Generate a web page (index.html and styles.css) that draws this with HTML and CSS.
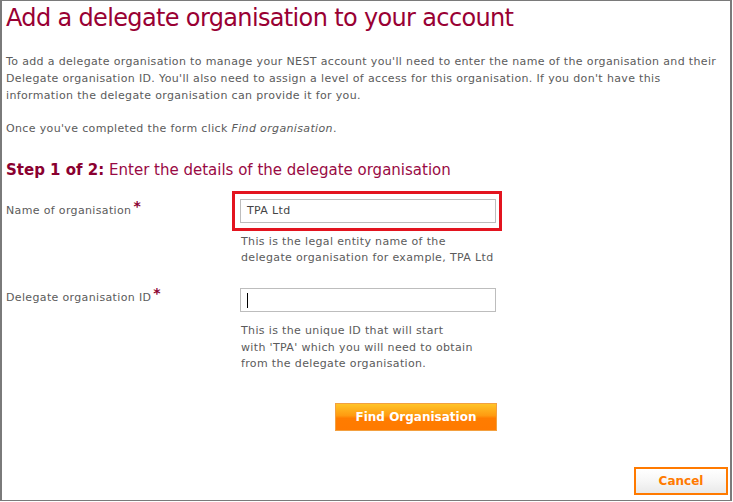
FILE: index.html
```html
<!DOCTYPE html>
<html>
<head>
<meta charset="utf-8">
<link rel="stylesheet" href="styles.css">
</head>
<body>
<div class="frame">
  <h1 class="title">Add a delegate organisation to your account</h1>
  <p class="intro">To add a delegate organisation to manage your NEST account you'll need to enter the name of the organisation and their Delegate organisation ID. You'll also need to assign a level of access for this organisation. If you don't have this information the delegate organisation can provide it for you.</p>
  <p class="intro once">Once you've completed the form click <em>Find organisation</em>.</p>
  <h2 class="step"><strong>Step 1 of 2:</strong> Enter the details of the delegate organisation</h2>

  <div class="row row-first">
    <label class="label">Name of organisation<span class="req">*</span></label>
    <div class="field">
      <div class="highlight">
        <div class="input">TPA Ltd</div>
      </div>
      <div class="help">This is the legal entity name of the<br>delegate organisation for example, TPA Ltd</div>
    </div>
  </div>

  <div class="row row-second">
    <label class="label">Delegate organisation ID<span class="req">*</span></label>
    <div class="field">
      <div class="input"><span class="caret"></span></div>
      <div class="help help-second">This is the unique ID that will start<br>with 'TPA' which you will need to obtain<br>from the delegate organisation.</div>
    </div>
  </div>

  <div class="actions">
    <button class="find">Find Organisation</button>
  </div>
  <div class="cancel-row">
    <button class="cancel">Cancel</button>
  </div>
</div>
</body>
</html>
```
FILE: styles.css
```css
html, body {
  margin: 0;
  padding: 0;
  background: #fff;
}
.frame {
  box-sizing: border-box;
  width: 732px;
  height: 501px;
  border: 1px solid #7a7a7a;
  border-left-width: 2px;
  border-right-width: 2px;
  padding: 0 0 0 4px;
  font-family: "DejaVu Sans", Verdana, sans-serif;
  font-size: 11px;
  letter-spacing: 0.35px;
  color: #5b5b5b;
}
.title {
  margin: 0;
  padding-top: 2px;
  font-weight: normal;
  font-size: 24px;
  letter-spacing: -0.65px;
  line-height: 31px;
  color: #990033;
}
.intro {
  margin: 19px 0 0 0;
  line-height: 17px;
}
.once {
  margin-top: 16px;
}
.step {
  margin: 23px 0 0 0;
  font-size: 15px;
  letter-spacing: 0;
  line-height: 20px;
  font-weight: normal;
  color: #990a44;
}
.step strong {
  color: #8a0030;
}
.row {
  display: flex;
}
.row-first {
  margin-top: 11px;
}
.row-second {
  margin-top: 22px;
}
.label {
  width: 234px;
  flex: none;
  padding-top: 13px;
}
.row-second .label {
  padding-top: 3px;
}
.req {
  color: #8a0030;
  font-weight: bold;
  font-size: 14px;
  vertical-align: 3px;
  line-height: 0;
  margin-left: 2px;
}
.highlight {
  width: 256px;
  border: 3px solid #e3141f;
  padding: 5px 3px 5px 5px;
  margin-left: -8px;
  box-sizing: content-box;
}
.input {
  box-sizing: border-box;
  width: 256px;
  height: 24px;
  border: 1px solid #bdbdbd;
  padding: 0 6px;
  line-height: 22px;
  color: #444;
  display: flex;
  align-items: center;
}
.caret {
  display: block;
  width: 1px;
  height: 15px;
  background: #000;
}
.help {
  margin-top: 3px;
  margin-left: 1px;
  line-height: 16px;
}
.help-second {
  margin-top: 11px;
  line-height: 16.5px;
}
.actions {
  display: flex;
  justify-content: flex-end;
  width: 491px;
  margin-top: 30px;
}
.find {
  width: 162px;
  height: 28px;
  border: 1px solid #f3a040;
  background: linear-gradient(#ffc428 0%, #ff9a10 45%, #ff7c00 55%, #ff7a00 100%);
  color: #fff;
  font-family: "DejaVu Sans", Verdana, sans-serif;
  font-weight: bold;
  font-size: 12px;
  letter-spacing: 0;
  padding: 0;
}
.cancel-row {
  display: flex;
  justify-content: flex-end;
  margin-top: 36px;
  padding-right: 2px;
}
.cancel {
  width: 94px;
  height: 28px;
  border: 2px solid #ff7a00;
  background: linear-gradient(#ffffff 0%, #f6f6f6 50%, #e9e9e9 100%);
  color: #ff7a00;
  font-family: "DejaVu Sans", Verdana, sans-serif;
  font-weight: bold;
  font-size: 12px;
  letter-spacing: 0;
  padding: 0;
}
```
